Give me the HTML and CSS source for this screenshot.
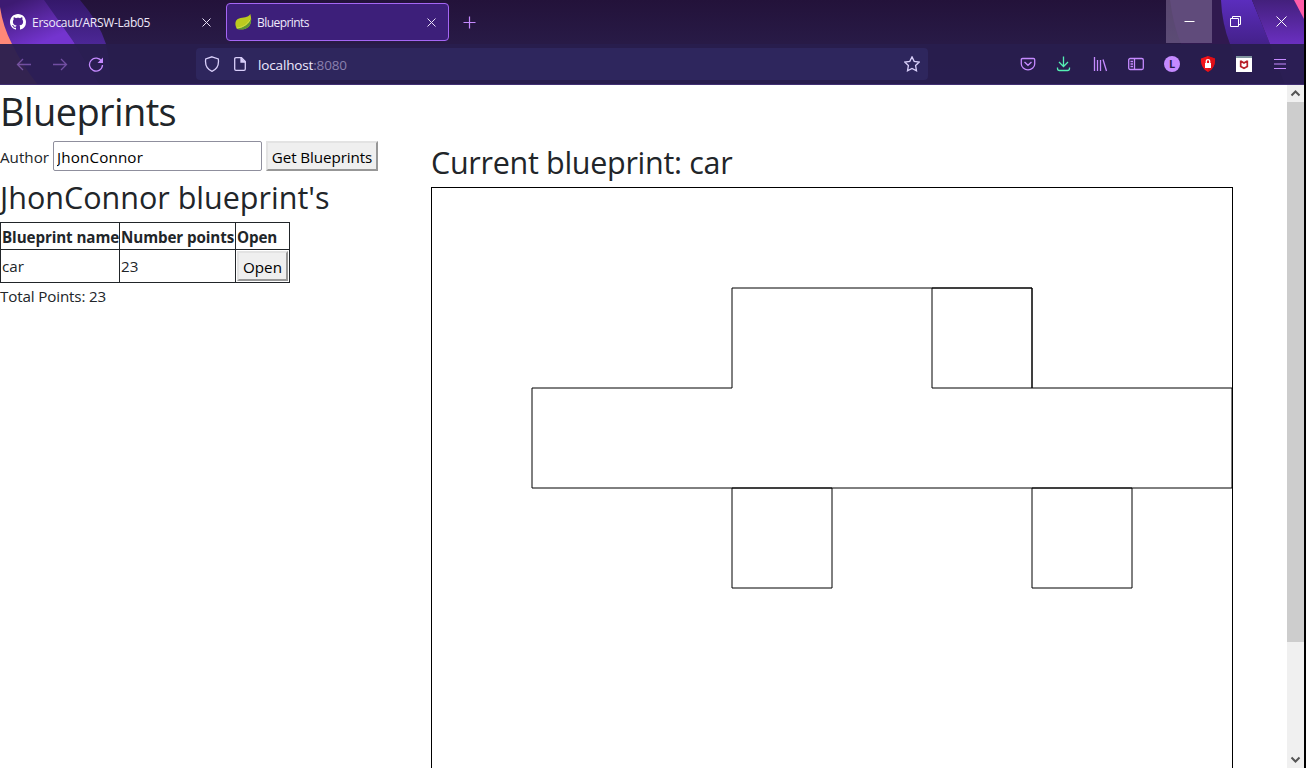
FILE: index.html
```html
<!DOCTYPE html>
<html lang="en">
<head>
<meta charset="utf-8">
<title>Blueprints</title>
<link rel="stylesheet" href="styles.css">
</head>
<body>
<div class="window">
  <header class="tabstrip">
    <svg class="theme" width="1304" height="85" viewBox="0 0 1304 85" aria-hidden="true">
      <defs>
        <linearGradient id="base" x1="0" y1="0" x2="0" y2="1"><stop offset="0" stop-color="#23123a"/><stop offset=".5" stop-color="#281a46"/><stop offset="1" stop-color="#281c4c"/></linearGradient>
        <linearGradient id="violet" gradientUnits="userSpaceOnUse" x1="20" y1="0" x2="38" y2="44"><stop offset="0" stop-color="#3d1a72"/><stop offset="1" stop-color="#7434cf"/></linearGradient>
        <linearGradient id="indigo" gradientUnits="userSpaceOnUse" x1="0" y1="0" x2="0" y2="44"><stop offset="0" stop-color="#34186a"/><stop offset="1" stop-color="#4c2796"/></linearGradient>
        <linearGradient id="indigoRight" gradientUnits="userSpaceOnUse" x1="0" y1="0" x2="0" y2="44"><stop offset="0" stop-color="#5b2dbd"/><stop offset="1" stop-color="#44218a"/></linearGradient>
        <linearGradient id="violetRight" gradientUnits="userSpaceOnUse" x1="0" y1="0" x2="0" y2="44"><stop offset="0" stop-color="#43207c"/><stop offset="1" stop-color="#6a2fc0"/></linearGradient>
      </defs>
      <rect width="1304" height="85" fill="url(#base)"/>
      <path d="M0 0H53L75 44L100 85H0Z" fill="url(#violet)"/>
      <path d="M44 0H80Q99 22 106 44Q111 65 110 85H100L75 44Z" fill="url(#indigo)"/>
      <path d="M0 7Q3 27 12 44Q22 65 38 85H0Z" fill="#ff8878"/>
      <path d="M1170 0H1222Q1222 24 1230 44H1181Q1173 24 1170 0Z" fill="#30194f"/>
      <path d="M1221 0H1252L1270 44L1285 85H1245L1230 44Q1222 24 1221 0Z" fill="url(#indigoRight)"/>
      <path d="M1252 0H1304V85H1285L1270 44Z" fill="url(#violetRight)"/>
      <path d="M1294 0H1304V19Z" fill="#ff5ca8"/>
    </svg>
    <div class="tab">
      <svg width="16" height="16" viewBox="0 0 16 16"><path fill="#fff" d="M8 0C3.58 0 0 3.58 0 8c0 3.54 2.29 6.53 5.47 7.59.4.07.55-.17.55-.38 0-.19-.01-.82-.01-1.49-2.01.37-2.53-.49-2.69-.94-.09-.23-.48-.94-.82-1.13-.28-.15-.68-.52-.01-.53.63-.01 1.08.58 1.23.82.72 1.21 1.87.87 2.33.66.07-.52.28-.87.51-1.07-1.78-.2-3.64-.89-3.64-3.95 0-.87.31-1.59.82-2.15-.08-.2-.36-1.02.08-2.12 0 0 .67-.21 2.2.82.64-.18 1.32-.27 2-.27s1.36.09 2 .27c1.53-1.04 2.2-.82 2.2-.82.44 1.1.16 1.92.08 2.12.51.56.82 1.27.82 2.15 0 3.07-1.87 3.75-3.65 3.95.29.25.54.73.54 1.48 0 1.07-.01 1.93-.01 2.2 0 .21.15.46.55.38A8.01 8.01 0 0 0 16 8c0-4.42-3.58-8-8-8z"/></svg>
      <span class="tab-title">Ersocaut/ARSW-Lab05</span>
      <svg class="tab-close" width="9" height="9" viewBox="0 0 9 9"><path d="M.5.5l8 8M8.500.5l-8 8"/></svg>
    </div>
    <div class="tab tab-active">
      <svg width="17" height="16" viewBox="0 0 17 16"><path fill="#bccb1f" d="M15.300 0C16.500 4 16.800 9 14 12.500C11 15.800 6 15.500 2 15C-.5 11-.3 6 4 4.500C8 3.200 13 4 15.300 0Z"/><path fill="#5d9634" d="M16 5C16.300 10 14.500 14 9 15.200C6 15.800 3 15.400 1.500 14.500C8 14 13.500 11 16 5Z"/><path d="M2 14C7 13.500 12 11 14.800 6" fill="none" stroke="#d8e052" stroke-width=".8"/></svg>
      <span class="tab-title">Blueprints</span>
      <svg class="tab-close" width="9" height="9" viewBox="0 0 9 9"><path d="M.5.5l8 8M8.500.5l-8 8"/></svg>
    </div>
    <svg class="new-tab" width="13" height="13" viewBox="0 0 13 13"><path d="M6.500.5v12M.5 6.500h12"/></svg>
    <div class="controls">
      <div class="control control-hover"><svg width="11" height="11" viewBox="0 0 11 11"><path d="M.5 5.500h10"/></svg></div>
      <div class="control"><svg width="11" height="11" viewBox="0 0 11 11"><path d="M.5 2.500h8v8h-8zM2.500 2.500v-2h8v8h-2"/></svg></div>
      <div class="control"><svg width="11" height="11" viewBox="0 0 11 11"><path d="M.5.5l10 10M10.500.5l-10 10"/></svg></div>
    </div>
  </header>
  <nav class="toolbar">
    <div class="nav-buttons">
      <svg class="dim" width="16" height="16" viewBox="0 0 16 16"><path d="M15 8.500H1.500M7 3L1.500 8.500L7 14"/></svg>
      <svg class="dim" width="16" height="16" viewBox="0 0 16 16"><path d="M1 8.500h13.500M9 3L14.500 8.500L9 14"/></svg>
      <svg width="16" height="16" viewBox="0 0 16 16"><path d="M13.700 5.500A6.500 6.500 0 1 0 14.500 9"/><path d="M15 1.500v5.500H9.500Z" fill="#c58aff" stroke="none"/></svg>
    </div>
    <div class="urlbar">
      <svg width="16" height="16" viewBox="0 0 16 16"><path d="M8 .8L14.300 3C15 8 13.200 13.200 8 15.300C2.800 13.200 1 8 1.700 3Z"/></svg>
      <svg class="page-icon" width="16" height="16" viewBox="0 0 16 16"><path d="M4 1.700h5.500L13.300 5.500V13q0 1.300-1.300 1.300H4q-1.300 0-1.300-1.300V3Q2.700 1.700 4 1.700Z"/><path d="M9 1.700V6h4.300" fill="#d9cffa"/></svg>
      <span class="url">localhost<span class="port">:8080</span></span>
      <svg class="star" width="16" height="16" viewBox="0 0 16 16"><path d="M8 .9L10.200 5.300L15.200 6L11.600 9.500L12.500 14.800L8 12.400L3.500 14.800L4.400 9.500L.8 6L5.800 5.300Z"/></svg>
    </div>
    <div class="actions">
      <svg width="16" height="16" viewBox="0 0 16 16"><path d="M2.500 2.500h11q1.200 0 1.200 1.200V8A6.700 5.800 0 0 1 1.300 8V3.700q0-1.200 1.200-1.200ZM4.500 6L8 9.300L11.500 6"/></svg>
      <svg class="download" width="16" height="16" viewBox="0 0 16 16"><path d="M7.500 .5v10M3 6L7.500 10.500L12 6M1.500 11.500v1q0 2 2 2h8q2 0 2-2v-1"/></svg>
      <svg width="16" height="16" viewBox="0 0 16 16"><path d="M2.500 1v14M5.500 4v11M8.500 4v11M11 3.500L14.500 15"/></svg>
      <svg width="16" height="16" viewBox="0 0 16 16"><rect x=".7" y="2.500" width="14.600" height="11" rx="1.500"/><path d="M6.500 2.500v11M2.500 5.500H5M2.500 8H5M2.500 10.500H5"/></svg>
      <span class="avatar">L</span>
      <svg width="16" height="16" viewBox="0 0 16 16"><path stroke="none" fill="#f31318" d="M8 0L15 2.500C15.500 8 13.500 13 8 16C2.500 13 .5 8 1 2.500Z"/><path stroke="none" fill="#c90a16" d="M8 0L15 2.500C15.500 8 13.500 13 8 16Z" opacity=".5"/><rect x="5" y="7" width="6" height="5" fill="#fff" stroke="none"/><path d="M6.300 7V5q0-1.300 1.700-1.300T9.700 5v2" stroke="#fff"/></svg>
      <svg width="16" height="16" viewBox="0 0 16 16"><path stroke="none" fill="#fff" d="M0 0h16v16H0z"/><path stroke="none" fill="#8095a0" d="M0 0h16v2H0z"/><path fill="none" stroke="#b9202a" stroke-width="1.700" d="M4.700 4.500V10.500L8 12.200L11.300 10.500V4.500M4.700 5L8 7L11.300 5"/></svg>
      <svg class="menu" width="16" height="16" viewBox="0 0 16 16"><path d="M2 3.500h12M2 8h12M2 12.500h12"/></svg>
    </div>
  </nav>
  <div class="viewport">
    <main class="page">
      <h1>Blueprints</h1>
      <div class="columns">
        <section class="search">
          <div class="form-row">
            <label class="label" for="author">Author</label>
            <input id="author" class="field" type="text" value="JhonConnor">
            <button class="button get">Get Blueprints</button>
          </div>
          <h2 class="owner">JhonConnor blueprint's</h2>
          <table class="blueprints">
            <thead><tr><th class="c-name">Blueprint name</th><th class="c-points">Number points</th><th class="c-open">Open</th></tr></thead>
            <tbody><tr><td>car</td><td>23</td><td><button class="button open">Open</button></td></tr></tbody>
          </table>
          <p class="total">Total Points: 23</p>
        </section>
        <section class="drawing">
          <h2 class="current">Current blueprint: car</h2>
          <svg class="canvas" width="800" height="800" viewBox="0 0 800 800">
            <path d="M100 200H300V100H600V200H800V300H100Z"/>
            <path d="M600 100V200H500V100Z"/>
            <path d="M300 300V400H400V300Z"/>
            <path d="M600 300V400H700V300Z"/>
          </svg>
        </section>
      </div>
    </main>
    <div class="scrollbar">
      <svg width="17" height="17" viewBox="0 0 17 17"><path d="M4.500 10.500L8.500 6.500L12.500 10.500"/></svg>
      <div class="thumb"></div>
      <svg class="down" width="17" height="17" viewBox="0 0 17 17"><path d="M4.500 6.500L8.500 10.500L12.500 6.500"/></svg>
    </div>
  </div>
</div>
</body>
</html>
```
FILE: styles.css
```css
* { box-sizing: border-box; }
body {
  margin: 0;
  height: 768px;
  overflow: hidden;
  background: #000;
  color: #212529;
  font: 15.2px/24px "Open Sans", "Noto Sans", sans-serif;
}
svg { display: block; flex: none; fill: none; }
.window { width: 1304px; height: 768px; display: flex; flex-direction: column; }

.tabstrip { position: relative; height: 44px; flex: none; display: flex; align-items: flex-start; color: #fff; }
.theme { position: absolute; top: 0; left: 0; }
.tab {
  position: relative;
  display: flex;
  align-items: center;
  width: 223px;
  height: 38px;
  margin-top: 3px;
  padding: 0 12px 0 10px;
  font-size: 12px;
  color: #efe9fa;
}
.tab-title { flex: 1; margin-left: 6px; padding-top: 2px; white-space: nowrap; letter-spacing: -.28px; }
.tab-active { margin-left: 3px; padding-left: 8px; border: 1px solid #a566f5; border-radius: 4px; background: #3d1f7a; }
.tab-active .tab-title { margin-left: 5px; letter-spacing: -.55px; }
.tab-close { stroke: #e9e0f8; stroke-width: 1; }
.new-tab { position: relative; margin: 16px 0 0 14px; stroke: #c58aff; stroke-width: 1.2; }
.controls { position: relative; display: flex; margin-left: auto; }
.control { width: 46px; height: 43px; display: grid; place-items: center; stroke: #fff; }
.control-hover { background: rgba(170, 150, 190, .4); }

.toolbar {
  position: relative;
  height: 41px;
  flex: none;
  display: flex;
  align-items: center;
  background: rgba(40, 29, 78, .95);
  border-bottom: 1px solid #412f72;
  stroke: #c58aff;
  stroke-width: 1.3;
}
.nav-buttons { display: flex; gap: 20px; width: 196px; padding-left: 16px; }
.dim { opacity: .45; }
.urlbar {
  display: flex;
  align-items: center;
  width: 732px;
  height: 32px;
  padding: 0 8px;
  border-radius: 4px;
  background: #2e265d;
  stroke: #d9cffa;
}
.page-icon { margin-left: 12px; }
.url { flex: 1; margin-left: 10px; padding-top: 2px; font-size: 13.5px; letter-spacing: -.15px; color: #efeaff; }
.port { color: #8a80ad; }
.actions { display: flex; gap: 20px; margin-left: 92px; }
.download { stroke: #55f0b4; }
.menu { stroke-width: 1.1; }
.avatar { width: 16px; height: 16px; border-radius: 50%; background: #c58aff; color: #281c4c; font: bold 11px/16px "Open Sans", sans-serif; text-align: center; }

.viewport { flex: 1; min-height: 0; display: flex; background: #fff; overflow: hidden; }
.page { flex: 1; min-width: 0; }
h1, h2, p { margin: 0; font-weight: 400; white-space: nowrap; }
h1 { height: 56px; font-size: 38px; line-height: 52px; letter-spacing: -.6px; }
h2 { font-size: 30.5px; line-height: 36px; padding-bottom: 2px; }
.columns { display: flex; }
.search { width: 431px; flex: none; }
.form-row { display: flex; height: 30px; }
.label { width: 53px; line-height: 32px; }
.field { width: 209px; height: 30px; margin-right: 4px; padding: 2px 3px 0; border: 1px solid #8f8f9d; border-radius: 2px; font: inherit; letter-spacing: .15px; color: #000; }
.button { height: 30px; padding: 0; border: 2px solid; border-color: #e3e3e3 #979797 #979797 #e3e3e3; background: #efefef; color: #000; font: inherit; line-height: 28px; white-space: nowrap; }
.get { width: 112px; letter-spacing: -.1px; }
.open { width: 51px; display: block; }
.owner { margin: 8px 0 5px; }
.blueprints { width: 290px; table-layout: fixed; border-collapse: collapse; }
.blueprints th, .blueprints td { padding: 1px; border: 1px solid #212529; text-align: left; white-space: nowrap; }
.blueprints th { height: 27px; padding-top: 3px; line-height: 22px; letter-spacing: -.1px; }
.blueprints td { height: 33px; line-height: 28px; }
.c-name { width: 119px; }
.c-points { width: 116px; }
.total { line-height: 26px; letter-spacing: -.15px; }
.drawing { padding-top: 3px; }
.current { margin-bottom: 5px; letter-spacing: -.3px; }
.canvas { box-sizing: content-box; border: 1px solid #000; stroke: #000; stroke-width: 1; }

.scrollbar { width: 17px; flex: none; display: flex; flex-direction: column; background: #f0f0f0; stroke: #555; stroke-width: 2; }
.thumb { height: 540px; background: #cdcdcd; }
.down { margin-top: auto; }
```
